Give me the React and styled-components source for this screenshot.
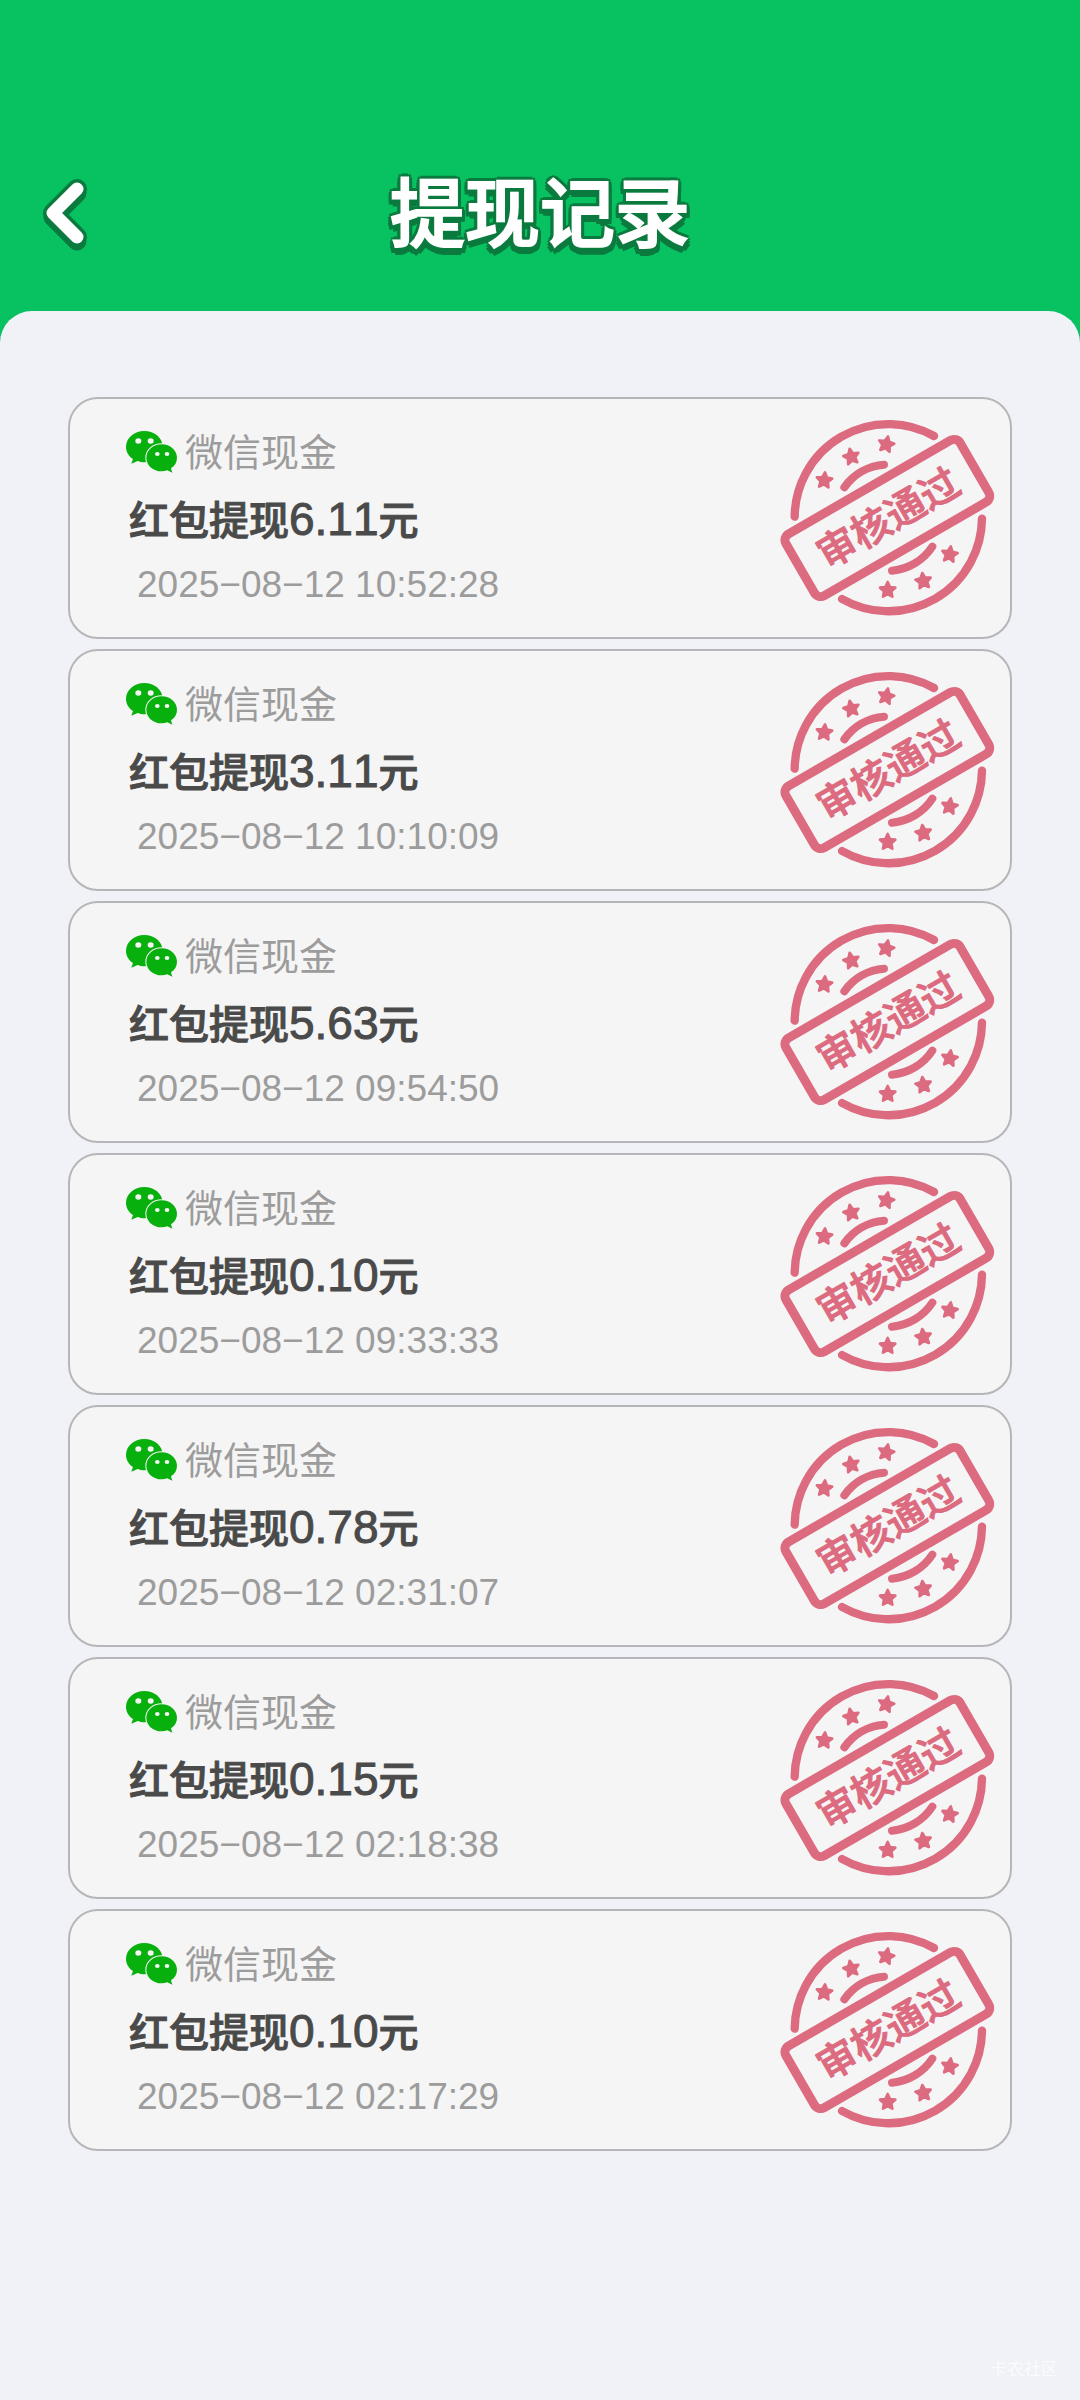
import React from 'react';
import styled, { createGlobalStyle } from 'styled-components';

const GlobalStyle = createGlobalStyle`
    * { box-sizing: border-box; }
    body {
        margin: 0;
        background: #08c261;
        font-family: "Liberation Sans", "Noto Sans CJK SC", sans-serif;
        font-kerning: none;
    }
`

const Page = styled.div`
    display: flex;
    flex-direction: column;
    min-height: 100vh;
`

const Header = styled.header`
    display: grid;
    grid-template-columns: 1fr auto 1fr;
    align-items: center;
    height: 311px;
    padding: 114px 36px 0;
`

const BackButton = styled.button`
    display: flex;
    justify-self: start;
    padding: 0;
    border: none;
    background: none;
    cursor: pointer;
`

const Title = styled.h1`
    margin: 0;
    padding-bottom: 8px;
    color: #fff;
    font-family: "Noto Sans CJK SC", sans-serif;
    font-size: 75px;
    font-weight: 500;
    line-height: 96px;
    -webkit-text-stroke: 2px #fff;
    text-shadow:
        -4px 0 #0b7a3e, 4px 0 #0b7a3e, 0 -4px #0b7a3e,
        -3px -3px #0b7a3e, 3px -3px #0b7a3e,
        -4px 3px #0b7a3e, 4px 3px #0b7a3e,
        -4px 6px #0b7a3e, 4px 6px #0b7a3e,
        0 5px #0b7a3e, 0 8px #0b7a3e;
`

const Sheet = styled.main`
    display: flex;
    flex: 1;
    flex-direction: column;
    padding: 86px 68px 0;
    border-radius: 32px 32px 0 0;
    background: #f0f2f7;
`

const Records = styled.ul`
    display: flex;
    flex-direction: column;
    gap: 10px;
    margin: 0;
    padding: 0;
    list-style: none;
`

const Card = styled.li`
    display: flex;
    align-items: center;
    justify-content: space-between;
    padding: 0 14px 0 55px;
    border: 2px solid #b6b6b8;
    border-radius: 30px;
    background: #f5f5f5;
`

const Info = styled.div`
    display: flex;
    flex-direction: column;
    padding: 21px 0 19px;
    line-height: 66px;
`

const Channel = styled.div`
    display: flex;
    align-items: center;
    gap: 7px;
    height: 66px;
    color: #9c9c9c;
    font-size: 38px;

    svg { margin-bottom: 4px; }
`

const Amount = styled.div`
    height: 66px;
    padding-left: 4px;
    color: #4a4a4a;
    font-size: 40px;
    font-weight: 500;
    -webkit-text-stroke: 1px #4a4a4a;
`

const Digits = styled.span`
    font-size: 46px;
`

const Time = styled.time`
    height: 66px;
    padding-left: 12px;
    color: #9c9c9c;
    font-size: 37px;
`

const StampText = styled.text`
    font-family: "Noto Sans CJK SC", sans-serif;
    font-size: 118px;
    font-weight: 500;
`

const Watermark = styled.footer`
    margin-top: auto;
    margin-right: -46px;
    padding-bottom: 18px;
    color: #fafbfd;
    font-size: 17px;
    line-height: 24px;
    text-align: right;
`

const records = [
    { amount: '6.11', time: '2025−08−12 10:52:28' },
    { amount: '3.11', time: '2025−08−12 10:10:09' },
    { amount: '5.63', time: '2025−08−12 09:54:50' },
    { amount: '0.10', time: '2025−08−12 09:33:33' },
    { amount: '0.78', time: '2025−08−12 02:31:07' },
    { amount: '0.15', time: '2025−08−12 02:18:38' },
    { amount: '0.10', time: '2025−08−12 02:17:29' },
]

// x, y, rotation
const stars = [
    [193, 271, 5],
    [274, 200, -12],
    [379, 163, 12],
    [383, 600, 0],
    [490, 573, -8],
    [569, 493, 8],
]

function BackIcon() {
    return (
        <svg width="60" height="76" viewBox="36 175 60 76" fill="none" strokeLinecap="round" strokeLinejoin="round">
            <path d="M77 193 L53 217 L77 241" stroke="#0b7a3e" strokeWidth="19" />
            <path d="M77 189 L53 213 L77 237" stroke="#0b7a3e" strokeWidth="20" />
            <path d="M77 189 L53 213 L77 237" stroke="#fff" strokeWidth="13" />
        </svg>
    )
}

function WechatIcon() {
    return (
        <svg width="53" height="43" viewBox="195 119 159 129" fill="#08b00e">
            <path d="M253 122 C222 122 198 143 198 170 C198 185 206 198 219 206 L214 220 L233 212 C239 214 246 216 253 216 C284 216 308 195 308 169 C308 143 284 122 253 122Z" />
            <path
                d="M305 162 C279 162 259 180 259 202 C259 225 279 243 305 243 C311 243 317 242 322 240 L337 247 L333 234 C345 226 351 215 351 202 C351 180 331 162 305 162Z"
                stroke="#f5f5f5" strokeWidth="6" paintOrder="stroke"
            />
            <g fill="#f5f5f5">
                <ellipse cx="235" cy="152" rx="9" ry="8" />
                <ellipse cx="272" cy="152" rx="9" ry="8" />
                <ellipse cx="292" cy="191" rx="7" ry="6" />
                <ellipse cx="321" cy="191" rx="7" ry="6" />
            </g>
        </svg>
    )
}

function Stamp() {
    return (
        <svg width="218" height="200" viewBox="54 84 654 600" fill="none" stroke="#dc6b80" strokeLinecap="round" strokeLinejoin="round">
            <path d="M104 380 A281 281 0 0 1 522 138" strokeWidth="25" />
            <path d="M666 386 A281 281 0 0 1 246 627" strokeWidth="25" />
            <path d="M253 292 A161 161 0 0 1 372 224" strokeWidth="24" />
            <path d="M396 542 A161 161 0 0 0 517 470" strokeWidth="24" />
            {stars.map(([x, y, turn]) => (
                <path
                    key={x}
                    d="M0 -24 L7 -9 L23 -7 L11 4 L14 20 L0 12 L-14 20 L-11 4 L-23 -7 L-7 -9Z"
                    transform={`translate(${x} ${y}) rotate(${turn})`}
                    fill="#dc6b80"
                    strokeWidth="8"
                />
            ))}
            <g transform="translate(382 384) rotate(-30)">
                <rect x="-302" y="-107" width="604" height="214" rx="22" strokeWidth="27" />
                <StampText x="2" y="44" textAnchor="middle" fill="#dc6b80" strokeWidth="3">审核通过</StampText>
            </g>
        </svg>
    )
}

export default function App() {
    return (
        <>
            <GlobalStyle />
            <Page>
                <Header>
                    <BackButton type="button" aria-label="返回"><BackIcon /></BackButton>
                    <Title>提现记录</Title>
                </Header>
                <Sheet>
                    <Records>
                        {records.map(record => (
                            <Card key={record.time}>
                                <Info>
                                    <Channel><WechatIcon />微信现金</Channel>
                                    <Amount>红包提现<Digits>{record.amount}</Digits>元</Amount>
                                    <Time>{record.time}</Time>
                                </Info>
                                <Stamp />
                            </Card>
                        ))}
                    </Records>
                    <Watermark>卡农社区</Watermark>
                </Sheet>
            </Page>
        </>
    )
}
